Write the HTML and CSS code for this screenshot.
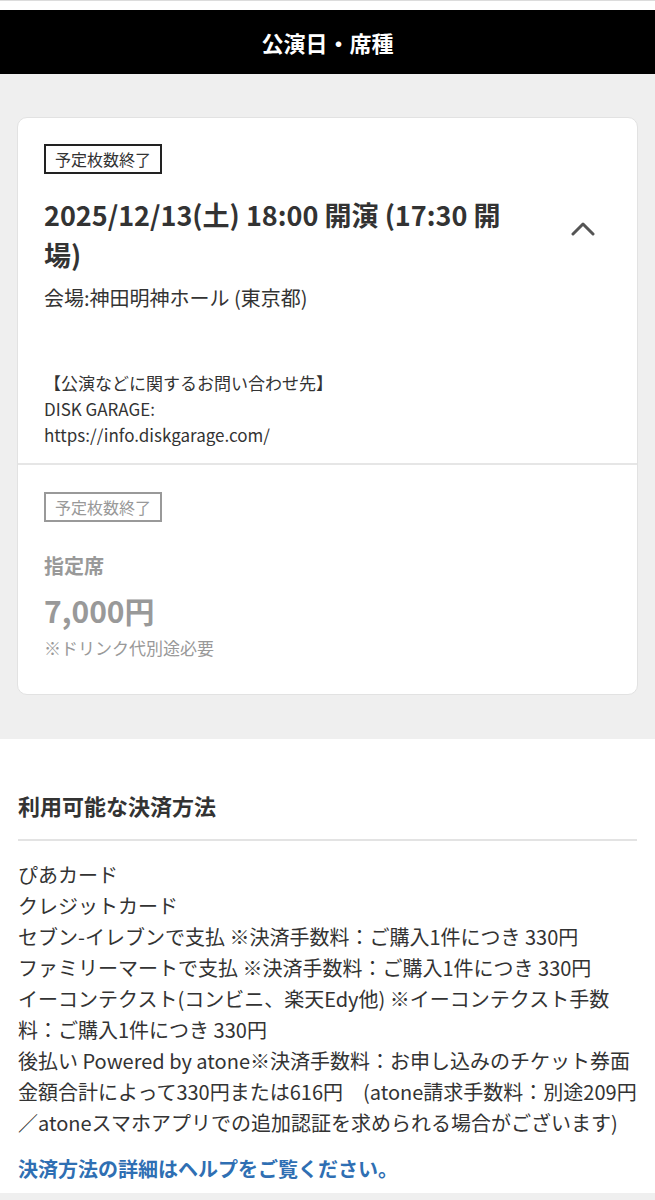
FILE: index.html
```html
<!DOCTYPE html>
<html lang="ja">
<head>
<meta charset="utf-8">
<link rel="stylesheet" href="styles.css">
</head>
<body>
<div class="topbar"></div>
<header class="header">公演日・席種</header>
<main class="main">
  <section class="card">
    <div class="card-top">
      <div class="card-info">
        <span class="badge">予定枚数終了</span>
        <h2 class="title">2025/12/13(土) 18:00 開演 (17:30 開場)</h2>
        <p class="venue">会場:神田明神ホール (東京都)</p>
        <p class="inquiry">【公演などに関するお問い合わせ先】<br>DISK GARAGE:<br>https://info.diskgarage.com/</p>
      </div>
      <div class="chevron">
        <svg width="26" height="16" viewBox="0 0 26 16"><path d="M3 14 L13 4 L23 14" fill="none" stroke="#555" stroke-width="3" stroke-linecap="round" stroke-linejoin="round"/></svg>
      </div>
    </div>
    <div class="card-bottom">
      <span class="badge badge-muted">予定枚数終了</span>
      <div class="seat">指定席</div>
      <div class="price">7,000円</div>
      <div class="note">※ドリンク代別途必要</div>
    </div>
  </section>
</main>
<section class="payment">
  <h3 class="pay-title">利用可能な決済方法</h3>
  <div class="pay-list">
    <div>ぴあカード</div>
    <div>クレジットカード</div>
    <div>セブン-イレブンで支払 ※決済手数料：ご購入1件につき 330円</div>
    <div>ファミリーマートで支払 ※決済手数料：ご購入1件につき 330円</div>
    <div>イーコンテクスト(コンビニ、楽天Edy他) ※イーコンテクスト手数料：ご購入1件につき 330円</div>
    <div>後払い Powered by atone※決済手数料：お申し込みのチケット券面金額合計によって330円または616円　(atone請求手数料：別途209円／atoneスマホアプリでの追加認証を求められる場合がございます)</div>
  </div>
  <a class="pay-link" href="#">決済方法の詳細はヘルプをご覧ください。</a>
</section>
<div class="bottom-strip"></div>
</body>
</html>
```

FILE: styles.css
```css
* { box-sizing: border-box; }
html, body { margin: 0; padding: 0; }
body {
  background: #efefef;
  font-family: "Noto Sans CJK JP", "Noto Sans", sans-serif;
  color: #333;
}
.topbar {
  height: 10px;
  background: #fff;
  border-top: 1px solid #dcdcdc;
}
.header {
  height: 64px;
  background: #000;
  color: #fff;
  font-size: 22px;
  font-weight: 700;
  display: flex;
  align-items: center;
  justify-content: center;
}
.main {
  padding: 43px 17px 44px;
}
.card {
  background: #fff;
  border: 1px solid #e2e2e2;
  border-radius: 10px;
}
.card-top {
  display: flex;
  padding: 26px 26px 15px 26px;
  border-bottom: 2px solid #e6e6e6;
}
.card-info { flex: 1; padding-right: 50px; }
.chevron {
  width: 40px;
  margin-right: 8px;
  padding-top: 76px;
  display: flex;
  justify-content: center;
}
.chevron svg { display: block; }
.badge {
  display: inline-block;
  font-size: 16px;
  line-height: 26px;
  padding: 0 9px;
  border: 2px solid #222;
  color: #333;
}
.badge-muted {
  border-color: #999;
  color: #999;
}
.title {
  margin: 21px 0 0;
  font-size: 27px;
  line-height: 40px;
  font-weight: 700;
  color: #333;
}
.venue {
  margin: 9px 0 0;
  font-size: 20px;
  line-height: 28px;
}
.inquiry {
  margin: 58px 0 0;
  font-size: 17px;
  line-height: 26px;
}
.card-bottom {
  padding: 27px 26px 34px;
  color: #999;
}
.seat {
  margin-top: 30px;
  font-size: 20px;
  line-height: 28px;
  font-weight: 700;
}
.price {
  margin-top: 10px;
  font-size: 30px;
  line-height: 40px;
  font-weight: 700;
}
.note {
  font-size: 17px;
  line-height: 24px;
  margin-top: 6px;
}
.payment {
  background: #fff;
  padding: 51px 18px 9px;
}
.pay-title {
  margin: 0;
  font-size: 22px;
  line-height: 30px;
  font-weight: 700;
  padding-bottom: 19px;
  border-bottom: 2px solid #e3e3e3;
}
.pay-list {
  margin-top: 18px;
  font-size: 20px;
  line-height: 31px;
}
.pay-link {
  display: block;
  margin-top: 16px;
  font-size: 20px;
  line-height: 30px;
  font-weight: 700;
  color: #2f6fb3;
  text-decoration: none;
}
.bottom-strip {
  height: 8px;
  background: #efefef;
}
```
